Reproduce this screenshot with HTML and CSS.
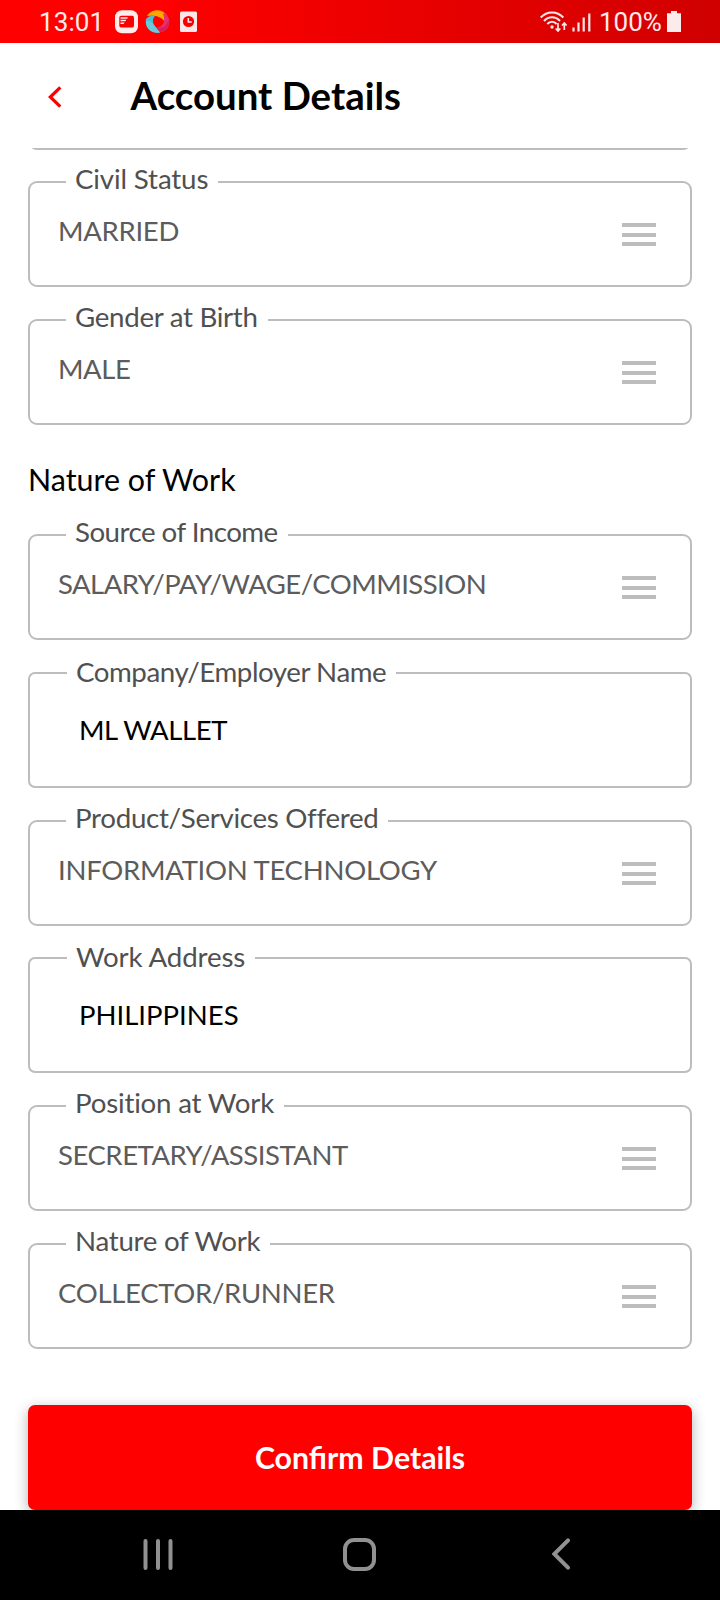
FILE: index.html
```html
<!DOCTYPE html>
<html lang="en">
<head>
<meta charset="utf-8">
<title>Account Details</title>
<link rel="stylesheet" href="styles.css">
</head>
<body>
<div class="screen">
  <div class="status-bar">
    <span class="clock">13:01</span>
    <svg class="status-icons" width="84" height="24" viewBox="0 0 84 24">
      <rect x="0" y="0.300" width="23" height="23" rx="7" fill="#ffebeb"/>
      <rect x="4.300" y="5.700" width="14.700" height="11.800" rx="1.800" fill="#f80000"/>
      <path d="M5.500 7.200h7.500l-.8 1.500H5.500zM5.500 9.800h5.800l-.8 1.500h-5zM5.500 12.400h4l-.8 1.600H5.500z" fill="#ffebeb"/>
      <path d="M32 6C36-.5 46-2 51 4.500L50 12C46 6 40 5 32 6z" fill="#ffa800"/>
      <path d="M50 3C58 10 54 21 46 22L41 17.500C48 18 51 11 48 4z" fill="#e5306a"/>
      <path d="M38.500 15.500C42 19 50 19 52 13L54 10C54 18 49 23 43 22z" fill="#d81f5c"/>
      <path d="M31 9C33 6 37 5 40 6C36 10 38 16 45 22.500C36 24 29 17 31 9z" fill="#4bbfd2"/>
      <path d="M31 12C35 8 38 14 45 22.500C37 24 31 19 31 12z" fill="#6bc9d8"/>
      <rect x="65" y="1.500" width="17" height="20.500" rx="1.500" fill="#ffe6e6"/>
      <circle cx="73.500" cy="11.500" r="5.600" fill="#f40000"/>
      <path d="M73.300 8v4h3.500" fill="none" stroke="#ffe6e6" stroke-width="1.600"/>
    </svg>
    <span class="spacer"></span>
    <svg class="signal-icons" width="52" height="24" viewBox="0 0 52 24">
      <g fill="none" stroke="#fbe6e6" stroke-width="2">
        <path d="M.7 6.500C7-.3 17-.3 23.300 6.500"/>
        <path d="M4 10C8.500 5 15.500 5 20 10"/>
        <path d="M7.300 13C10 10 14 10 16.700 13"/>
      </g>
      <circle cx="12" cy="16" r="1.700" fill="#fbe6e6"/>
      <path d="M18 12v8M15.700 17.500L18 20l2.300-2.500M24.300 19v-7M22 14.500l2.300-2.500 2.300 2.500" fill="none" stroke="#fbe6e6" stroke-width="1.700"/>
      <path d="M33.500 20.500v-4M38.500 20.500v-9M43.700 20.500v-14M49.300 20.500v-18" stroke="#fbe6e6" stroke-width="2.200"/>
    </svg>
    <span class="battery-text">100%</span>
    <svg class="battery" width="14" height="21" viewBox="0 0 14 21"><path d="M4 0h6v2.300h4V21H0V2.300h4z" fill="#fbebeb"/></svg>
  </div>

  <header class="header">
    <svg class="back" width="14" height="22" viewBox="0 0 14 22"><path d="M12.300 1.300L2.300 11l10 9.700" fill="none" stroke="#f00" stroke-width="3.200"/></svg>
    <h1 class="title">Account Details</h1>
  </header>

  <main class="form">
    <div class="clip"><div class="field"></div></div>
    <div class="field select civil"><span class="label">Civil Status</span><span class="value">MARRIED</span><span class="menu"><i></i><i></i><i></i></span></div>
    <div class="field select gender"><span class="label">Gender at Birth</span><span class="value">MALE</span><span class="menu"><i></i><i></i><i></i></span></div>
    <h2 class="section">Nature of Work</h2>
    <div class="field select income"><span class="label">Source of Income</span><span class="value">SALARY/PAY/WAGE/COMMISSION</span><span class="menu"><i></i><i></i><i></i></span></div>
    <div class="field input company"><span class="label">Company/Employer Name</span><span class="value">ML WALLET</span></div>
    <div class="field select product"><span class="label">Product/Services Offered</span><span class="value">INFORMATION TECHNOLOGY</span><span class="menu"><i></i><i></i><i></i></span></div>
    <div class="field input address"><span class="label">Work Address</span><span class="value">PHILIPPINES</span></div>
    <div class="field select position"><span class="label">Position at Work</span><span class="value">SECRETARY/ASSISTANT</span><span class="menu"><i></i><i></i><i></i></span></div>
    <div class="field select nature"><span class="label">Nature of Work</span><span class="value">COLLECTOR/RUNNER</span><span class="menu"><i></i><i></i><i></i></span></div>
    <button class="confirm">Confirm Details</button>
  </main>

  <nav class="nav">
    <svg width="30" height="32" viewBox="0 0 30 32"><path d="M2.500 3v27M15 3v27M27.500 3v27" stroke="#919191" stroke-width="4" stroke-linecap="round"/></svg>
    <svg class="home" width="33" height="33" viewBox="0 0 33 33"><rect x="2" y="2" width="29" height="29" rx="9" fill="none" stroke="#919191" stroke-width="4"/></svg>
    <svg class="nav-back" width="18" height="32" viewBox="0 0 18 32"><path d="M16 2.300L2.300 16 16 29.700" fill="none" stroke="#919191" stroke-width="4" stroke-linecap="round"/></svg>
  </nav>
</div>
</body>
</html>
```
FILE: styles.css
```css
* { box-sizing: border-box; }
body { margin: 0; background: #fff; font-family: Lato, sans-serif; }
.screen { width: 720px; height: 1600px; display: flex; flex-direction: column; overflow: hidden; }

.status-bar {
  height: 43px;
  flex: none;
  display: flex;
  align-items: flex-start;
  padding: 0 39px 0 39px;
  background: linear-gradient(90deg, #f00 0%, #f00 20%, #d00000 100%);
  font: 26px/30px Roboto, sans-serif;
  color: #ffeaea;
}
.clock { width: 76px; padding-top: 7px; letter-spacing: .1px; }
.status-icons { margin-top: 10px; }
.spacer { flex: 1; }
.signal-icons { margin-top: 11px; }
.battery-text { margin-left: 7px; width: 68px; padding-top: 7px; white-space: nowrap; }
.battery { margin-top: 11px; }

.header { height: 105px; flex: none; display: flex; align-items: flex-start; padding-left: 48px; }
.back { margin-top: 43px; }
.title { margin: 29px 0 0 68.500px; font-size: 38.400px; line-height: 46px; font-weight: 700; }

.form { flex: 1; min-height: 0; padding: 0 28px; display: flex; flex-direction: column; overflow: hidden; }
.clip { height: 2px; flex: none; display: flex; flex-direction: column; justify-content: flex-end; overflow: hidden; margin-bottom: 31px; }
.field {
  position: relative;
  height: 106px;
  flex: none;
  display: flex;
  justify-content: space-between;
  align-items: flex-start;
  margin-bottom: 32px;
  padding: 31px 34px 0 28px;
  border: 2px solid #bdbdbd;
  border-radius: 9px;
}
.clip .field { margin: 0; }
.label {
  position: absolute;
  left: 36px;
  top: -21px;
  padding: 0 10px 0 9px;
  background: #fff;
  color: #505050;
  font-size: 27.700px;
  line-height: 34px;
  white-space: nowrap;
}
.value { font-size: 27.500px; line-height: 34px; color: #5c5c5c; white-space: nowrap; }
.menu { width: 34px; display: flex; flex-direction: column; gap: 5.500px; padding-top: 9px; }
.menu i { height: 4px; background: #bdbdbd; }
.input { height: 116px; padding: 39px 0 0 49px; border-radius: 7px; }
.input .label { left: 37px; top: -19px; }
.input .value { color: #000; }

.civil .label { letter-spacing: -.14px; }
.civil .value { letter-spacing: -.3px; }
.gender .label { letter-spacing: -.3px; }
.gender .value { letter-spacing: -.45px; }
.income .label { letter-spacing: -.52px; }
.income .value { letter-spacing: -.54px; }
.company .label { letter-spacing: -.44px; }
.company .value { letter-spacing: -.42px; }
.product .label { letter-spacing: -.3px; }
.product .value { letter-spacing: -.27px; }
.address { margin-top: -1px; }
.address .label { letter-spacing: -.12px; }
.address .value { letter-spacing: 0; }
.position .label { letter-spacing: -.2px; }
.position .value { letter-spacing: -.46px; }
.nature .label { letter-spacing: -.27px; }
.nature .value { letter-spacing: -.3px; }

.section { margin: 4px 0 37px; font-size: 30.400px; line-height: 36px; font-weight: 400; }
.confirm {
  flex: none;
  height: 105px;
  margin-top: 24px;
  padding: 0 0 2px;
  border: 0;
  border-radius: 7px;
  background: #f00;
  color: #fff;
  font: 700 30.300px/36px Lato, sans-serif;
  box-shadow: 0 4px 14px rgba(0, 0, 0, .3);
}
.nav { height: 90px; flex: none; display: flex; align-items: flex-start; padding: 28px 0 0 143px; background: #000; }
.home { margin-left: 170px; }
.nav-back { margin-left: 175.500px; }
```
